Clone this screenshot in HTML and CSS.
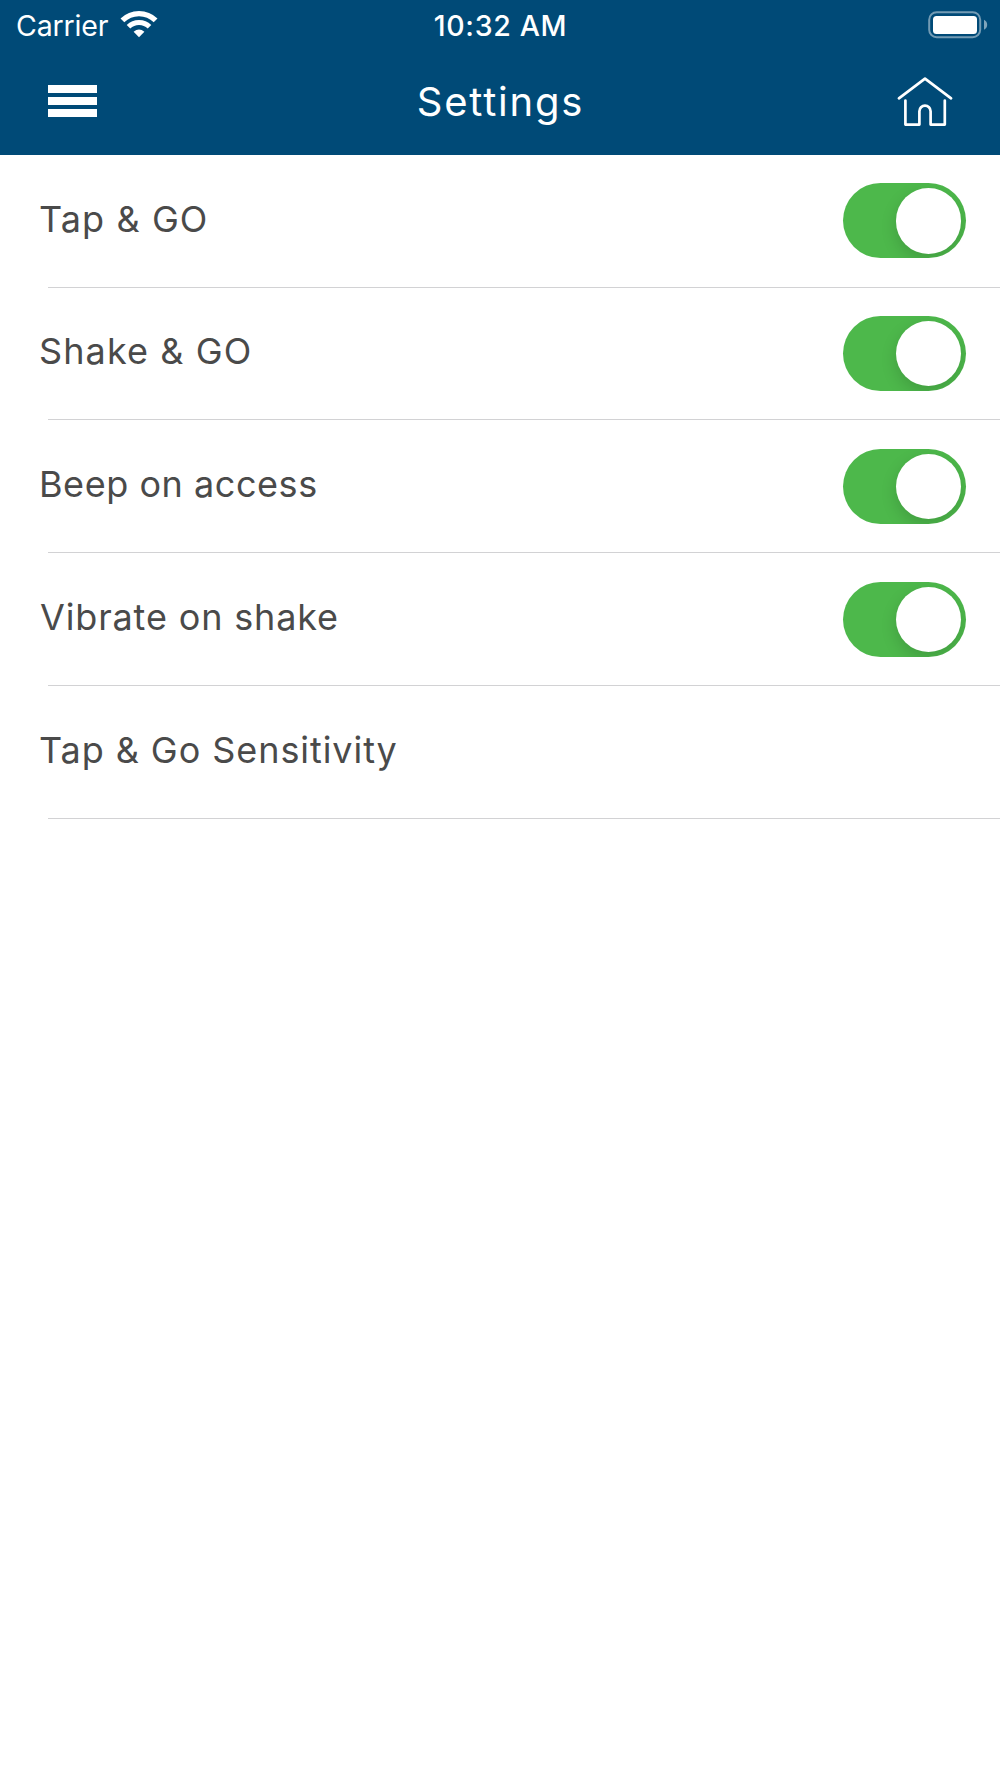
FILE: index.html
```html
<!DOCTYPE html>
<html lang="en">
<head>
<meta charset="utf-8">
<title>Settings</title>
<link rel="stylesheet" href="styles.css">
</head>
<body>
<header class="header">
  <div class="status">
    <div class="status-left">
      <span class="carrier">Carrier</span>
      <svg class="wifi" width="38" height="28" viewBox="0 0 38 28" fill="none" stroke="#fff">
        <path d="M2.4 10.4A23.7 23.7 0 0 1 35.6 10.4" stroke-width="5.4"/>
        <path d="M8.5 16.8A14.8 14.8 0 0 1 29.5 16.8" stroke-width="5"/>
        <path d="M13.6 21.8Q19 17 24.4 21.8L19 27.2Z" fill="#fff" stroke="none"/>
      </svg>
    </div>
    <span class="time">10:32 AM</span>
    <svg class="battery" width="60" height="28" viewBox="0 0 60 28">
      <rect x="1.2" y="1.2" width="51" height="25" rx="7.5" fill="none" stroke="#fff" stroke-opacity=".45" stroke-width="2"/>
      <rect x="5" y="5" width="44" height="18" rx="3.5" fill="#fff"/>
      <path d="M56 8.8Q59.2 10.4 59.2 13.8Q59.2 17.2 56 18.8Z" fill="#fff" fill-opacity=".5"/>
    </svg>
  </div>
  <nav class="nav">
    <button class="menu" aria-label="Menu"><i class="bar"></i><i class="bar"></i><i class="bar"></i></button>
    <h1 class="title">Settings</h1>
    <svg class="home" width="56" height="50" viewBox="0 0 56 50" fill="none" stroke="#fff" stroke-width="2.7" stroke-linecap="round" stroke-linejoin="round">
      <path d="M1.9 22.3L28 2.7L54.1 22.3"/>
      <path d="M8.4 24.5V48.6H22.4V35.2A5.6 5.6 0 0 1 33.6 35.2V48.6H47.8V24.5"/>
    </svg>
  </nav>
</header>
<main class="list">
  <div class="row"><span class="label tap">Tap &amp; GO</span><span class="switch"><i class="knob"></i></span></div>
  <div class="row"><span class="label shake">Shake &amp; GO</span><span class="switch"><i class="knob"></i></span></div>
  <div class="row"><span class="label beep">Beep on access</span><span class="switch"><i class="knob"></i></span></div>
  <div class="row"><span class="label vibrate">Vibrate on shake</span><span class="switch"><i class="knob"></i></span></div>
  <div class="row"><span class="label sensitivity">Tap &amp; Go Sensitivity</span></div>
</main>
</body>
</html>
```

FILE: styles.css
```css
* { box-sizing: border-box; }

body {
  margin: 0;
  min-height: 1778px;
  background: #fff;
  font-family: Inter, "Liberation Sans", sans-serif;
}

.header {
  height: 154.67px;
  background: #004a77;
  color: #fff;
}

.status {
  display: grid;
  grid-template-columns: 1fr auto 1fr;
  align-items: center;
  height: 51px;
  padding: 0 12px 0 16px;
  font-size: 28.5px;
}

.status-left { display: flex; align-items: center; gap: 11.5px; }
.carrier { letter-spacing: -0.15px; }
.wifi { margin-top: -4px; }
.time { font-weight: 500; letter-spacing: 0.65px; margin-left: -3px; }
.battery { justify-self: end; margin-top: -2px; }

.nav {
  display: grid;
  grid-template-columns: 1fr auto 1fr;
  align-items: center;
  height: 103px;
  padding: 0 47px 3px 48px;
}

.menu {
  display: flex;
  flex-direction: column;
  gap: 4px;
  width: 49px;
  padding: 0;
  border: 0;
  background: none;
}

.bar { width: 100%; height: 8px; background: #fff; }

.title {
  margin: 0;
  font-size: 40px;
  font-weight: 400;
  letter-spacing: 1.8px;
}

.home { justify-self: end; margin-top: -1px; }

.list { padding-top: 0.4px; }

.row {
  display: flex;
  align-items: center;
  justify-content: space-between;
  height: 132.87px;
  padding: 0 34px 1.4px 40px;
  background: linear-gradient(#d2d2d4, #d2d2d4) 48px 100% / 100% 1.33px no-repeat;
}

.label {
  padding-bottom: 4.4px;
  color: #4a4a4a;
  font-size: 36px;
  font-weight: 400;
}

.tap { letter-spacing: 1.1px; margin-left: -1px; }
.shake { letter-spacing: 1.1px; margin-left: -1px; }
.beep { letter-spacing: 0.55px; margin-left: -1px; }
.vibrate { letter-spacing: 0.85px; }
.sensitivity { letter-spacing: 0.93px; margin-left: -1px; }

.switch {
  display: flex;
  align-items: center;
  justify-content: flex-end;
  width: 123px;
  height: 75px;
  padding-right: 5px;
  border-radius: 38px;
  background: #4db84b;
  overflow: hidden;
}

.knob {
  width: 65.5px;
  height: 65.5px;
  border-radius: 50%;
  background: #fff;
  box-shadow: 0 6px 16px rgba(0, 0, 0, 0.15);
}
```
